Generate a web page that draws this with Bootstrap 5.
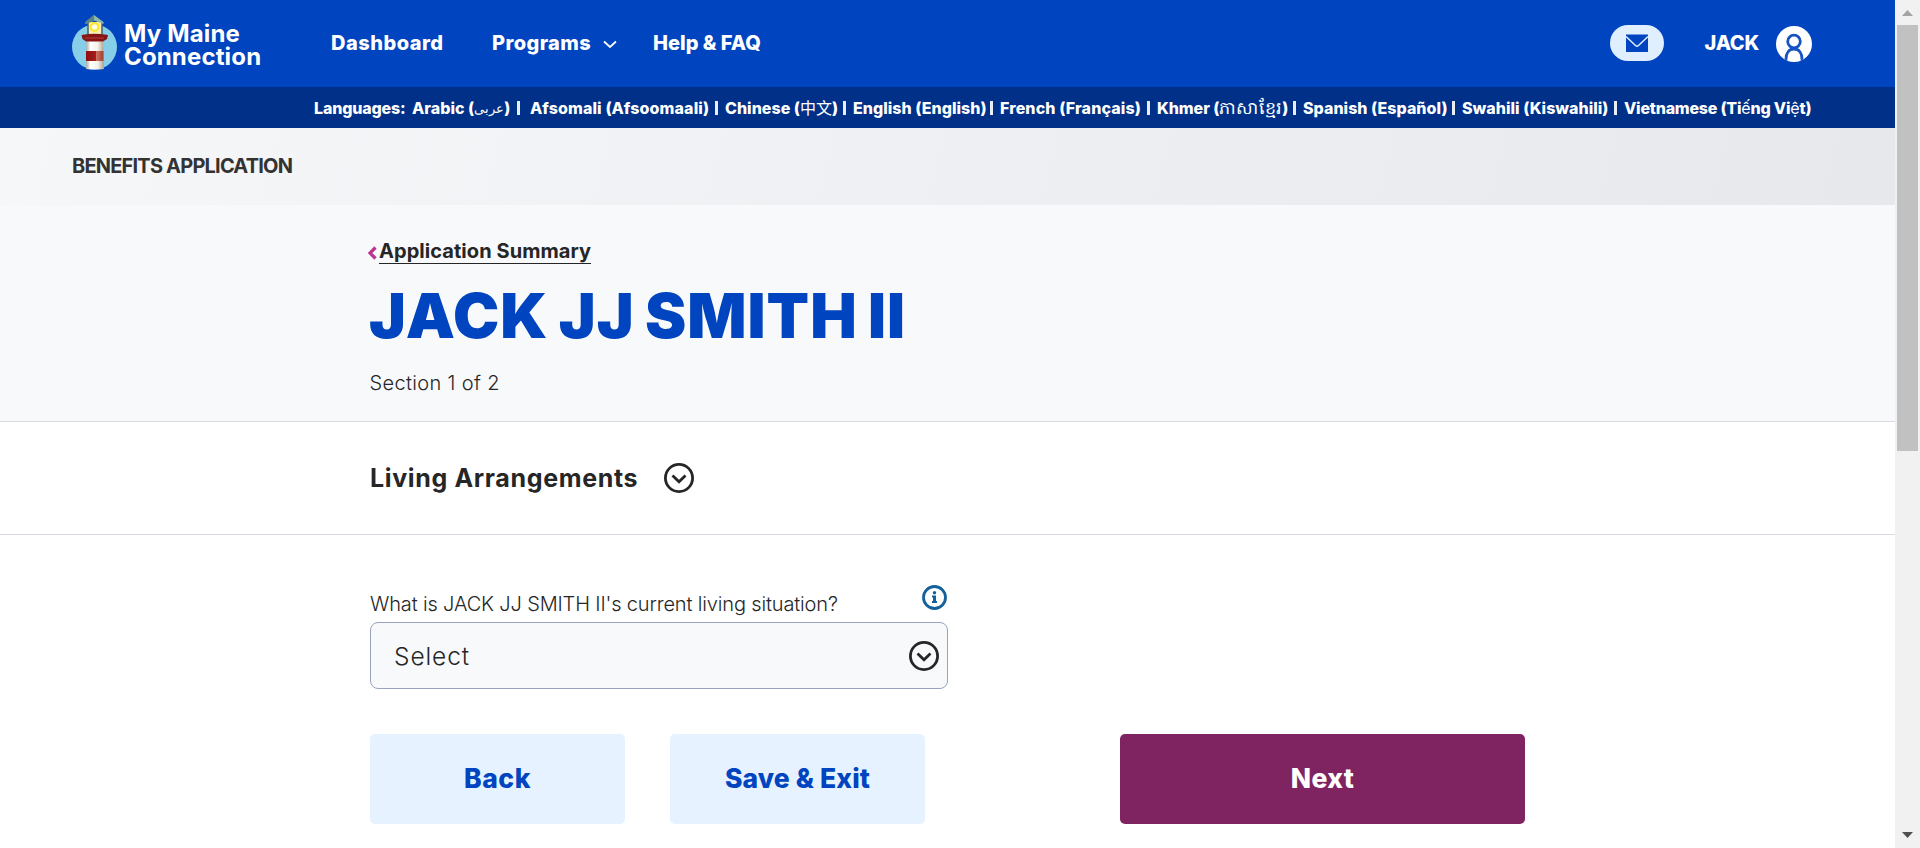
<!DOCTYPE html>
<html lang="en">
<head>
<meta charset="utf-8">
<meta name="viewport" content="width=device-width, initial-scale=1">
<title>My Maine Connection</title>
<link href="https://cdn.jsdelivr.net/npm/bootstrap@5.3.0/dist/css/bootstrap.min.css" rel="stylesheet">
<style>
body{font-family:Inter,"Liberation Sans","Noto Sans CJK SC",sans-serif;color:#262626;background:#fff;line-height:1}
a{color:inherit;text-decoration:none}
svg{display:block;flex:none}
.shell{height:100vh}
.topbar{height:87px;background:#0044bf;padding:0 83px 2px 72px}
.brand-mark{width:45px;height:56px;margin-top:-2px}
.brand-name{font-size:24px;font-weight:700;line-height:23px;letter-spacing:.15px;margin-left:7px;width:207px;padding-top:4px}
.brand-name span{height:23px}
.main-link{font-size:20px;font-weight:800;white-space:nowrap}
.l-dash{letter-spacing:.5px;width:161px}
.l-prog{letter-spacing:.4px;width:111px}
.l-faq{letter-spacing:0}
.mail-pill{width:54px;height:36px;background:#e0efff;margin-right:40px}
.user-name{margin-right:17px;letter-spacing:-.25px}
.langbar{height:41px;background:#003087;padding-left:314px;padding-top:1px;font-size:16px;font-weight:800;white-space:nowrap;
 display:grid;grid-template-columns:98px 118px 195px 128px 147px 157px 146px 159px 162px 190px;align-items:center}
.langbar>*{display:flex;align-items:center;letter-spacing:.02px}
.langbar .bar-mark{width:3px;height:14px;background:#e9eef6;margin-left:auto;margin-right:7px}
.langbar .native{font-weight:400;letter-spacing:0}
.banner{height:77px;padding:0 0 1px 72px;background:linear-gradient(105deg,#f6f7f9,#e7e8ec);color:#333;font-size:20px;font-weight:700;letter-spacing:-.8px}
.intro{height:217px;background:#f8f9fb;border-bottom:1px solid #d9dae2;padding:34px 0 0 368px}
.crumb{font-size:20px;font-weight:700;line-height:24px;letter-spacing:.06px}
.crumb span{border-bottom:1.5px solid #262626;height:25px;width:212px;white-space:nowrap}
.person{font-size:62px;font-weight:900;line-height:64px;letter-spacing:1px;word-spacing:-3px;color:#0044bf;margin:20px 0 0 1px}
.step{font-size:20px;font-weight:300;line-height:24px;letter-spacing:.35px;margin:23px 0 0 1.5px}
.section-head{height:113px;border-bottom:1px solid #d9dae2;padding-left:370px}
.section-head h2{font-size:25px;font-weight:700;letter-spacing:.65px;margin:0;width:294px;white-space:nowrap}
.form-area{padding:49px 0 0 370px}
.question{width:578px;height:38px;font-size:20px;font-weight:300;letter-spacing:-.15px;white-space:nowrap}
.question label{line-height:24px;margin-top:8px}
.pick{width:578px;height:67px;border:1px solid #97a3bf;border-radius:8px;background:#f8f9fb;padding:0 8px 0 23px;font-size:24.5px;font-weight:300;letter-spacing:.9px;color:#262626}
.pick span{padding-top:2px}
.actions{margin-top:45px}
.act{height:90px;border:0;border-radius:5px;font-size:26.5px;font-weight:800;padding:0}
.act-soft{width:255px;background:#e6f2ff;color:#0044bf;margin-right:45px}
.act-next{width:405px;background:#802461;color:#fff;margin-left:150px;letter-spacing:.4px}
.scroller{width:25px;background:#f1f1f1;padding:0 2px}
.scroller .thumb{height:426px;background:#c1c1c1}
</style>
</head>
<body class="overflow-hidden">
<div class="shell d-flex">
<div class="flex-grow-1">
<header>
<nav class="topbar d-flex align-items-center">
<svg class="brand-mark" viewBox="0 0 45 56"><circle cx="22.500" cy="33" r="22.500" fill="#87cfe9"/>
<defs><linearGradient id="tower"><stop stop-color="#aaa9a2"/><stop offset=".25" stop-color="#fff"/><stop offset=".65" stop-color="#f6f2e8"/><stop offset="1" stop-color="#a9a18e"/></linearGradient>
<linearGradient id="band"><stop stop-color="#8c1010"/><stop offset=".55" stop-color="#a81c1c"/><stop offset=".6" stop-color="#c77561"/><stop offset="1" stop-color="#a93a30"/></linearGradient></defs>
<path d="M14.500 22H31l1 33q-9 1-18 0z" fill="url(#tower)"/>
<path d="M14 37h17.500v10H14z" fill="url(#band)"/>
<path d="M16 8h14v13H16z" fill="#f8efb6"/><path d="M16 8v12M30 8v12" stroke="#465e66" stroke-width="1.500"/>
<circle cx="22.500" cy="13" r="5" fill="#fbe62e"/><circle cx="22.500" cy="13" r="2.800" fill="#fffde2"/>
<path d="M22 1 13.500 8v2L22 6.500l9.500 3.500V8z" fill="#8fb8a8"/><path d="M22 1v6l-8.500 3V8z" fill="#598481"/>
<path d="M9.500 21q13-2.500 26.500 0l-1 4-4 2.500H14L10.500 25z" fill="#861616"/><path d="M13 24h19" stroke="#b43b35" stroke-width="1"/></svg>
<a class="brand-name text-white" href="#"><span class="d-block">My Maine</span><span class="d-block">Connection</span></a>
<a class="main-link text-white l-dash" href="#">Dashboard</a>
<a class="main-link text-white l-prog" href="#">Programs</a>
<svg width="14" height="9" viewBox="0 0 14 9" class="mt-1 ms-0"><path d="m1 1.500 6 5.500 6-5.500" fill="none" stroke="#fff" stroke-width="1.700"/></svg>
<a class="main-link text-white l-faq flex-grow-1" style="margin-left:36px" href="#">Help &amp; FAQ</a>
<a class="mail-pill rounded-pill d-flex align-items-center justify-content-center" href="#" aria-label="Messages"><svg width="22" height="18" viewBox="0 0 22 18"><path d="M0 .5h22V18H0z" fill="#0044bf"/><path d="M0 2.500 9.500 11.500q1.500 1.300 3 0L22 2.500" fill="none" stroke="#e0efff" stroke-width="1.500"/></svg></a>
<a class="main-link text-white user-name" href="#">JACK</a>
<svg width="36" height="36" viewBox="0 0 36 36" style="margin-top:2px"><defs><clipPath id="face"><circle cx="18" cy="18" r="18"/></clipPath></defs><circle cx="18" cy="18" r="18" fill="#fff"/><g clip-path="url(#face)" fill="none" stroke="#1553c2" stroke-width="2.800"><circle cx="18" cy="15.500" r="6.300"/><path d="M10 36v-3c0-6 3-10 8-10s8 4 8 10v3"/></g></svg>
</nav>
<div class="langbar text-white">
<span style="letter-spacing:-.15px">Languages:</span>
<a href="#">Arabic (<span class="native" lang="ar" style="font-size:13px">عربی</span>)<i class="bar-mark" style="margin-right:10px"></i></a>
<a href="#" style="letter-spacing:.12px">Afsomali (Afsoomaali)<i class="bar-mark"></i></a>
<a href="#">Chinese (<span class="native" lang="zh">中文</span>)<i class="bar-mark"></i></a>
<a href="#">English (English)<i class="bar-mark"></i></a>
<a href="#" style="letter-spacing:.12px">French (Français)<i class="bar-mark"></i></a>
<a href="#" style="letter-spacing:-.07px">Khmer (<span class="native" lang="km" style="font-size:17.5px">ភាសាខ្មែរ</span>)<i class="bar-mark"></i></a>
<a href="#">Spanish (Español)<i class="bar-mark"></i></a>
<a href="#">Swahili (Kiswahili)<i class="bar-mark"></i></a>
<a href="#" style="letter-spacing:-.22px">Vietnamese (Ti<span class="native">ế</span>ng&nbsp;Vi<span class="native">ệ</span>t)</a>
</div>
</header>
<div class="banner d-flex align-items-center">BENEFITS APPLICATION</div>
<section class="intro">
<a class="crumb d-flex align-items-start" href="#"><svg width="9" height="14" viewBox="0 0 9 14" style="margin:7px 2px 0 0"><path d="M7.500 1.500 2 7l5.500 5.500" fill="none" stroke="#bb3491" stroke-width="3.200"/></svg><span>Application Summary</span></a>
<h1 class="person">JACK JJ SMITH II</h1>
<p class="step">Section 1 of 2</p>
</section>
<section class="section-head d-flex align-items-center">
<h2>Living Arrangements</h2>
<svg width="30" height="30" viewBox="0 0 30 30"><circle cx="15" cy="15" r="13.600" fill="none" stroke="#262626" stroke-width="2.800"/><path d="m8.500 12.500 6.500 6.300 6.500-6.300" fill="none" stroke="#262626" stroke-width="2.800"/></svg>
</section>
<form class="form-area">
<div class="question d-flex justify-content-between align-items-start"><label>What is JACK JJ SMITH II's current living situation?</label>
<svg width="25" height="25" viewBox="0 0 25 25" style="margin:1px 1px 0 0"><circle cx="12.500" cy="12.500" r="11" fill="none" stroke="#13609b" stroke-width="2.800"/><circle cx="12.500" cy="7.700" r="1.700" fill="#13609b"/><path d="M10 10.500h4v5.500h1v2h-5v-2h1v-3.500h-1z" fill="#13609b"/></svg></div>
<button type="button" class="pick d-flex align-items-center justify-content-between"><span>Select</span>
<svg width="30" height="30" viewBox="0 0 30 30"><circle cx="15" cy="15" r="13.600" fill="none" stroke="#262626" stroke-width="2.800"/><path d="m8.500 12.500 6.500 6.300 6.500-6.300" fill="none" stroke="#262626" stroke-width="2.800"/></svg></button>
<div class="actions d-flex">
<button type="button" class="btn act act-soft" style="letter-spacing:.6px">Back</button>
<button type="button" class="btn act act-soft" style="letter-spacing:.15px">Save &amp; Exit</button>
<button type="button" class="btn act act-next">Next</button>
</div>
</form>
</div>
<div class="scroller d-flex flex-column" aria-hidden="true">
<svg width="21" height="25" viewBox="0 0 21 25"><path d="M5 16 10.500 10 16 16z" fill="#a3a3a3"/></svg>
<div class="thumb"></div>
<svg class="mt-auto" width="21" height="25" viewBox="0 0 21 25"><path d="M5 9h11l-5.500 6z" fill="#505050"/></svg>
</div>
</div>
<script src="https://cdn.jsdelivr.net/npm/bootstrap@5.3.0/dist/js/bootstrap.bundle.min.js"></script>
</body>
</html>
